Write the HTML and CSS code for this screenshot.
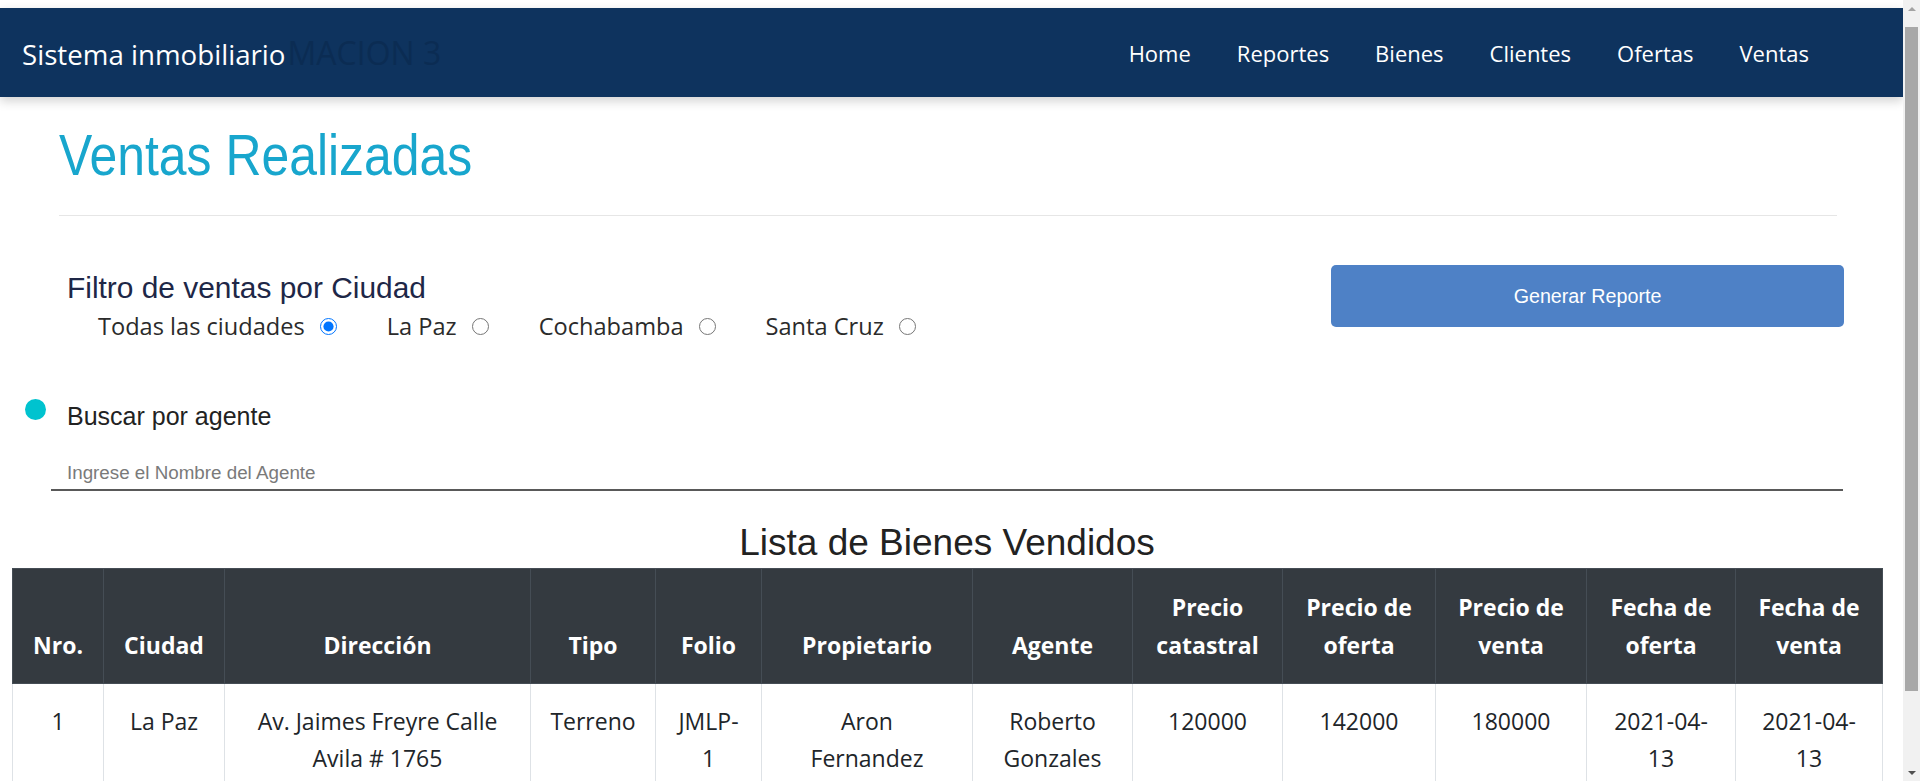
FILE: index.html
```html
<!DOCTYPE html>
<html lang="es">
<head>
<meta charset="utf-8">
<title>Ventas Realizadas</title>
<link rel="stylesheet" href="styles.css">
</head>
<body>
<div class="app">
  <div class="page">
    <nav class="navbar">
      <div class="brand">
        <a class="brand-name" href="#">Sistema inmobiliario</a>
        <span class="brand-ghost">MACION 3</span>
      </div>
      <ul class="nav-links">
        <li><a href="#">Home</a></li>
        <li><a href="#">Reportes</a></li>
        <li><a href="#">Bienes</a></li>
        <li><a href="#">Clientes</a></li>
        <li><a href="#">Ofertas</a></li>
        <li><a href="#">Ventas</a></li>
      </ul>
    </nav>

    <main>
      <header class="page-header">
        <h1><span class="title-text">Ventas Realizadas</span></h1>
        <hr>
      </header>

      <section class="filters">
        <div class="city-filter">
          <h2>Filtro de ventas por Ciudad</h2>
          <div class="radios">
            <label>Todas las ciudades <input type="radio" name="city" checked></label>
            <label>La Paz <input type="radio" name="city"></label>
            <label>Cochabamba <input type="radio" name="city"></label>
            <label>Santa Cruz <input type="radio" name="city"></label>
          </div>
        </div>
        <button class="btn-report" type="button">Generar Reporte</button>
      </section>

      <section class="search">
        <div class="search-label">
          <span class="dot"></span>
          <label for="agente">Buscar por agente</label>
        </div>
        <input id="agente" class="search-input" type="text" placeholder="Ingrese el Nombre del Agente">
      </section>

      <section class="table-section">
        <h3 class="table-title">Lista de Bienes Vendidos</h3>
        <table class="sales">
          <colgroup>
            <col class="c-nro"><col class="c-ciudad"><col class="c-dir"><col class="c-tipo">
            <col class="c-folio"><col class="c-prop"><col class="c-agente"><col class="c-pcat">
            <col class="c-pof"><col class="c-pven"><col class="c-fof"><col class="c-fven">
          </colgroup>
          <thead>
            <tr>
              <th>Nro.</th>
              <th>Ciudad</th>
              <th>Dirección</th>
              <th>Tipo</th>
              <th>Folio</th>
              <th>Propietario</th>
              <th>Agente</th>
              <th>Precio catastral</th>
              <th>Precio de oferta</th>
              <th>Precio de venta</th>
              <th>Fecha de oferta</th>
              <th>Fecha de venta</th>
            </tr>
          </thead>
          <tbody>
            <tr>
              <td>1</td>
              <td>La Paz</td>
              <td>Av. Jaimes Freyre Calle Avila # 1765</td>
              <td>Terreno</td>
              <td>JMLP-1</td>
              <td class="names">Aron Fernandez</td>
              <td>Roberto Gonzales</td>
              <td>120000</td>
              <td>142000</td>
              <td>180000</td>
              <td>2021-04-13</td>
              <td>2021-04-13</td>
            </tr>
          </tbody>
        </table>
      </section>
    </main>
  </div>

  <div class="scrollbar">
    <span class="sb-arrow sb-up"></span>
    <span class="sb-thumb"></span>
    <span class="sb-space"></span>
    <span class="sb-arrow sb-down"></span>
  </div>
</div>
</body>
</html>
```

FILE: styles.css
```css
* { box-sizing: border-box; }

html, body {
  margin: 0;
  padding: 0;
  height: 781px;
  overflow: hidden;
  background: #ffffff;
}

.app {
  display: flex;
  height: 781px;
}

.page {
  flex: 1;
  padding-top: 8px;
  overflow: hidden;
  min-width: 0;
}

/* ---------- navbar ---------- */
.navbar {
  position: relative;
  z-index: 1;
  height: 89px;
  display: flex;
  align-items: center;
  justify-content: space-between;
  padding: 0 94px 0 22px;
  background: #0e335e;
  box-shadow: 0 4px 10px rgba(0, 0, 0, 0.18);
  font-family: "Open Sans", "Liberation Sans", sans-serif;
}

.brand {
  display: flex;
  align-items: baseline;
  font-size: 27.7px;
  white-space: nowrap;
}

.brand-name {
  color: #ffffff;
  text-decoration: none;
}

.brand-ghost {
  margin-left: 2px;
  font-size: 32px;
  color: #0b2c53;
}

.nav-links {
  display: flex;
  gap: 46px;
  list-style: none;
  margin: 0;
  padding: 0;
}

.nav-links a {
  color: #ffffff;
  text-decoration: none;
  font-size: 22px;
}

/* ---------- header ---------- */
.page-header {
  padding: 0 66px 0 59px;
}

.page-header h1 {
  margin: 22px 0 0;
  font-family: "Liberation Sans", Arial, sans-serif;
  font-weight: normal;
  font-size: 58px;
  line-height: 71px;
  color: #18a6cd;
}

.title-text {
  display: inline-block;
  transform: scaleX(0.86);
  transform-origin: left center;
}

.page-header hr {
  margin: 25px 0 0;
  border: 0;
  border-top: 1px solid #e6e6e6;
}

/* ---------- filters ---------- */
.filters {
  display: flex;
  justify-content: space-between;
  align-items: flex-start;
  margin-top: 49px;
  padding: 0 59px 0 67px;
}

.city-filter {
  padding-top: 5px;
}

.city-filter h2 {
  margin: 0;
  font-family: "Liberation Sans", Arial, sans-serif;
  font-weight: normal;
  font-size: 29.9px;
  line-height: 36px;
  color: #1e2747;
}

.radios {
  display: flex;
  gap: 50px;
  margin-top: 5px;
  padding-left: 31px;
  font-family: "Open Sans", "Liberation Sans", sans-serif;
  font-size: 23.6px;
  line-height: 30px;
  color: #2b2b2b;
}

.radios label {
  display: flex;
  align-items: center;
  gap: 15px;
}

.radios input {
  width: 17px;
  height: 17px;
  margin: 0;
}

.btn-report {
  width: 513px;
  height: 62px;
  border: 0;
  border-radius: 5px;
  background: #4e81c6;
  color: #ffffff;
  font-family: "Liberation Sans", Arial, sans-serif;
  font-size: 19.7px;
}

/* ---------- search ---------- */
.search {
  margin-top: 60px;
}

.search-label {
  display: flex;
  align-items: flex-start;
  gap: 21px;
  padding-left: 25px;
}

.dot {
  width: 21px;
  height: 21px;
  margin-top: -2px;
  border-radius: 50%;
  background: #00c3cf;
}

.search-label label {
  font-family: "Liberation Sans", Arial, sans-serif;
  font-size: 25px;
  line-height: 30px;
  color: #222222;
}

.search-input {
  display: block;
  width: calc(100% - 111px);
  height: 34px;
  margin: 26px 60px 0 51px;
  padding: 0 16px;
  border: 0;
  border-bottom: 2px solid #595959;
  background: transparent;
  font-family: "Liberation Sans", Arial, sans-serif;
  font-size: 18.8px;
  color: #333333;
  outline: none;
}

.search-input::placeholder {
  color: #7a7a7a;
}

/* ---------- table ---------- */
.table-section {
  margin: 0 21px 0 12px;
}

.table-title {
  margin: 30px 0 3px;
  text-align: center;
  font-family: "Liberation Sans", Arial, sans-serif;
  font-weight: normal;
  font-size: 37px;
  line-height: 44px;
  color: #222222;
}

.sales {
  width: 1870px;
  border-collapse: collapse;
  table-layout: fixed;
  font-family: "Open Sans", "Liberation Sans", sans-serif;
  font-size: 23px;
}

.c-nro { width: 91px; }
.c-ciudad { width: 121px; }
.c-dir { width: 306px; }
.c-tipo { width: 125px; }
.c-folio { width: 106px; }
.c-prop { width: 211px; }
.c-agente { width: 160px; }
.c-pcat { width: 150px; }
.c-pof { width: 153px; }
.c-pven { width: 151px; }
.c-fof { width: 149px; }
.c-fven { width: 147px; }

.sales th {
  padding: 19px 16px;
  line-height: 38px;
  vertical-align: bottom;
  text-align: center;
  font-weight: bold;
  color: #ffffff;
  background: #343a40;
  border: 1px solid #454d55;
}

.sales td {
  padding: 19px 16px;
  line-height: 37px;
  vertical-align: top;
  text-align: center;
  color: #212529;
  border: 1px solid #dee2e6;
}

.sales td.names {
  padding-left: 30px;
  padding-right: 30px;
}

/* ---------- scrollbar ---------- */
.scrollbar {
  width: 17px;
  flex: 0 0 17px;
  display: flex;
  flex-direction: column;
  align-items: center;
  background: #f1f1f1;
}

.sb-arrow {
  width: 17px;
  height: 17px;
  display: flex;
  align-items: center;
  justify-content: center;
}

.sb-arrow::before {
  content: "";
  border-left: 4px solid transparent;
  border-right: 4px solid transparent;
}

.sb-up::before { border-bottom: 4px solid #a3a3a3; }
.sb-down::before { border-top: 4px solid #505050; }

.sb-thumb {
  width: 13px;
  height: 664px;
  margin-top: 10px;
  background: #a8a8a8;
}

.sb-space { flex: 1; }
```
